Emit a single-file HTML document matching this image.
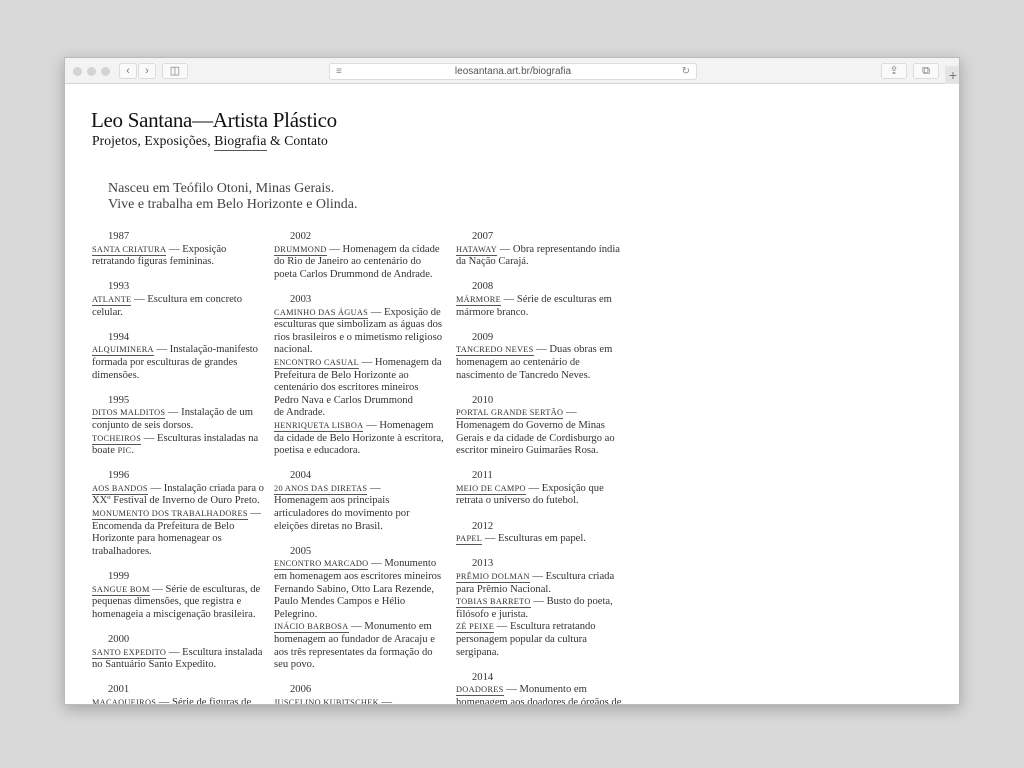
<!DOCTYPE html>
<html><head><meta charset="utf-8"><style>
*{margin:0;padding:0;box-sizing:border-box}
body{width:1024px;height:768px;background:#d9d9d9;position:relative;overflow:hidden;font-family:"Liberation Serif",serif;color:#222}
.win{position:absolute;left:64px;top:57px;width:896px;height:648px;background:#fff;overflow:hidden;box-shadow:0 4px 14px rgba(0,0,0,.25);border:1px solid #bbb}
.bar{position:absolute;left:0;top:0;width:100%;height:26px;background:#f3f3f3;border-bottom:1px solid #d4d4d4}
.dot{position:absolute;top:9px;width:9px;height:9px;border-radius:50%;background:#d3d3d3}
.btn{position:absolute;top:5px;height:16px;border:1px solid #dcdcdc;border-radius:3px;background:#fafafa;color:#777;font:11px "Liberation Sans",sans-serif;text-align:center;line-height:14px}
.url{position:absolute;left:264px;top:5px;width:368px;height:17px;background:#fff;border:1px solid #dcdcdc;border-radius:3px;font:10px "Liberation Sans",sans-serif;color:#555;text-align:center;line-height:15px}
.h1{position:absolute;left:26px;top:50px;font-size:21px;color:#111;letter-spacing:-.3px}
.h2{position:absolute;left:27px;top:75px;font-size:13.6px;color:#111;letter-spacing:.1px}
.h2 u{text-decoration:none;border-bottom:1.5px solid #555;padding-bottom:2px}
.intro{position:absolute;left:43px;top:123px;font-size:14px;line-height:16px;color:#444}
.col{position:absolute;top:173px;width:178px;font-size:10.6px;line-height:12.6px;color:#333;white-space:nowrap}
.y{padding-left:16px}
.b{margin-bottom:12.6px}
.n{font-size:8.3px;text-transform:uppercase;letter-spacing:.3px;border-bottom:1px solid #555;padding-bottom:1px;line-height:10px}
</style></head><body>
<div class="win">
<div class="bar">
<div class="dot" style="left:8px"></div><div class="dot" style="left:22px"></div><div class="dot" style="left:36px"></div>
<div class="btn" style="left:54px;width:18px">&#8249;</div><div class="btn" style="left:73px;width:18px">&#8250;</div>
<div class="btn" style="left:97px;width:26px">&#9707;</div>
<div class="url"><span style="position:absolute;left:6px;color:#888">&#8801;</span>leosantana.art.br/biografia<span style="position:absolute;right:6px;color:#888">&#8635;</span></div>
<div class="btn" style="left:816px;width:26px">&#8682;</div><div class="btn" style="left:848px;width:26px">&#10697;</div>
<div style="position:absolute;left:880px;top:8px;width:16px;height:18px;background:#e4e4e4;color:#777;font:14px 'Liberation Sans',sans-serif;text-align:center;line-height:18px">+</div>
</div>
<div class="h1">Leo Santana—Artista Plástico</div>
<div class="h2">Projetos, Exposições, <u>Biografia</u> &amp; Contato</div>
<div class="intro">Nasceu em Teófilo Otoni, Minas Gerais.<br>Vive e trabalha em Belo Horizonte e Olinda.</div>

<div class="col" style="left:27px">
<div class="b"><div class="y">1987</div><span class="n">Santa Criatura</span> — Exposição<br>retratando figuras femininas.</div>
<div class="b"><div class="y">1993</div><span class="n">Atlante</span> — Escultura em concreto<br>celular.</div>
<div class="b"><div class="y">1994</div><span class="n">Alquiminera</span> — Instalação-manifesto<br>formada por esculturas de grandes<br>dimensões.</div>
<div class="b"><div class="y">1995</div><span class="n">Ditos Malditos</span> — Instalação de um<br>conjunto de seis dorsos.<br><span class="n">Tocheiros</span> — Esculturas instaladas na<br>boate <span style="font-size:8.3px;letter-spacing:.3px">PIC</span>.</div>
<div class="b"><div class="y">1996</div><span class="n">Aos Bandos</span> — Instalação criada para o<br>XXº Festival de Inverno de Ouro Preto.<br><span class="n">Monumento dos Trabalhadores</span> —<br>Encomenda da Prefeitura de Belo<br>Horizonte para homenagear os<br>trabalhadores.</div>
<div class="b"><div class="y">1999</div><span class="n">Sangue Bom</span> — Série de esculturas, de<br>pequenas dimensões, que registra e<br>homenageia a miscigenação brasileira.</div>
<div class="b"><div class="y">2000</div><span class="n">Santo Expedito</span> — Escultura instalada<br>no Santuário Santo Expedito.</div>
<div class="b"><div class="y">2001</div><span class="n">Macaqueiros</span> — Série de figuras de<br>macacos.</div>
</div>

<div class="col" style="left:209px">
<div class="b"><div class="y">2002</div><span class="n">Drummond</span> — Homenagem da cidade<br>do Rio de Janeiro ao centenário do<br>poeta Carlos Drummond de Andrade.</div>
<div class="b"><div class="y">2003</div><span class="n">Caminho das Águas</span> — Exposição de<br>esculturas que simbolizam as águas dos<br>rios brasileiros e o mimetismo religioso<br>nacional.<br><span class="n">Encontro Casual</span> — Homenagem da<br>Prefeitura de Belo Horizonte ao<br>centenário dos escritores mineiros<br>Pedro Nava e Carlos Drummond<br>de Andrade.<br><span class="n">Henriqueta Lisboa</span> — Homenagem<br>da cidade de Belo Horizonte à escritora,<br>poetisa e educadora.</div>
<div class="b"><div class="y">2004</div><span class="n">20 Anos das Diretas</span> —<br>Homenagem aos principais<br>articuladores do movimento por<br>eleições diretas no Brasil.</div>
<div class="b"><div class="y">2005</div><span class="n">Encontro Marcado</span> — Monumento<br>em homenagem aos escritores mineiros<br>Fernando Sabino, Otto Lara Rezende,<br>Paulo Mendes Campos e Hélio<br>Pelegrino.<br><span class="n">Inácio Barbosa</span> — Monumento em<br>homenagem ao fundador de Aracaju e<br>aos três representates da formação do<br>seu povo.</div>
<div class="b"><div class="y">2006</div><span class="n">Juscelino Kubitschek</span> —<br>Homenagem.</div>
</div>

<div class="col" style="left:391px">
<div class="b"><div class="y">2007</div><span class="n">Hataway</span> — Obra representando índia<br>da Nação Carajá.</div>
<div class="b"><div class="y">2008</div><span class="n">Mármore</span> — Série de esculturas em<br>mármore branco.</div>
<div class="b"><div class="y">2009</div><span class="n">Tancredo Neves</span> — Duas obras em<br>homenagem ao centenário de<br>nascimento de Tancredo Neves.</div>
<div class="b"><div class="y">2010</div><span class="n">Portal Grande Sertão</span> —<br>Homenagem do Governo de Minas<br>Gerais e da cidade de Cordisburgo ao<br>escritor mineiro Guimarães Rosa.</div>
<div class="b"><div class="y">2011</div><span class="n">Meio de Campo</span> — Exposição que<br>retrata o universo do futebol.</div>
<div class="b"><div class="y">2012</div><span class="n">Papel</span> — Esculturas em papel.</div>
<div class="b"><div class="y">2013</div><span class="n">Prêmio Dolman</span> — Escultura criada<br>para Prêmio Nacional.<br><span class="n">Tobias Barreto</span> — Busto do poeta,<br>filósofo e jurista.<br><span class="n">Zé Peixe</span> — Escultura retratando<br>personagem popular da cultura<br>sergipana.</div>
<div class="b"><div class="y">2014</div><span class="n">Doadores</span> — Monumento em<br>homenagem aos doadores de órgãos de<br>Sergipe.</div>
</div>
</div>
</body></html>
